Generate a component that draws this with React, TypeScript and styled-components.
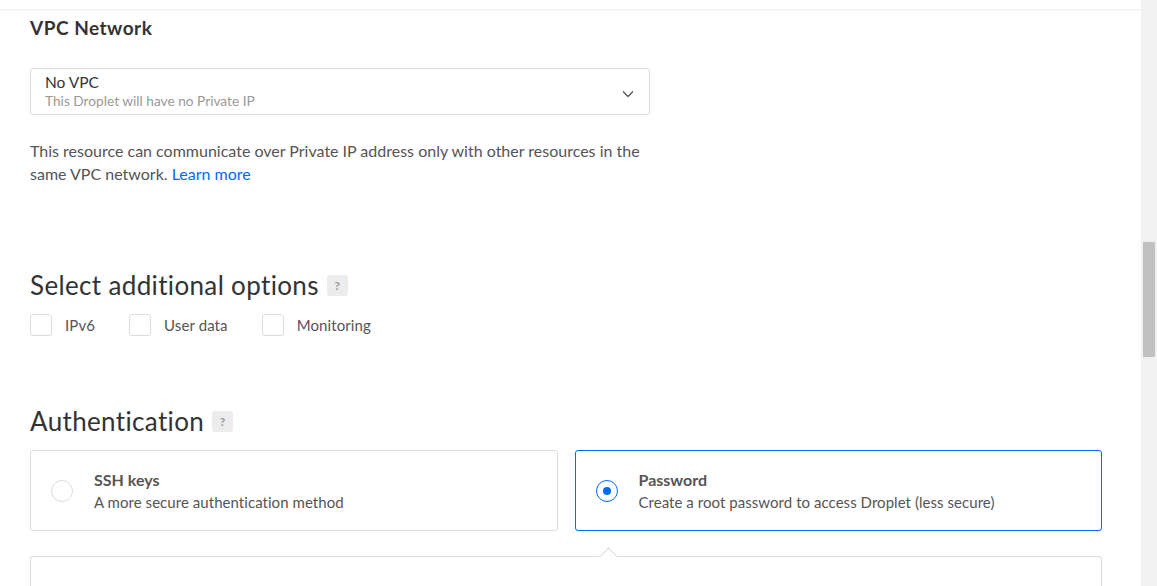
import React from "react";
import styled, { createGlobalStyle } from "styled-components";

const Global = createGlobalStyle`
  html, body { margin: 0; padding: 0; background: #fff; }
  body { font-family: Lato, "Open Sans", "Liberation Sans", sans-serif; -webkit-font-smoothing: antialiased; }
  * { box-sizing: border-box; }
`;

const Shell = styled.div`
  display: flex;
  width: 1157px;
  height: 586px;
  overflow: hidden;
`;

const Main = styled.div`
  flex: 1;
  display: flex;
  flex-direction: column;
  min-width: 0;
`;

const TopBar = styled.div`
  height: 10px;
  flex: none;
  border-bottom: 1px solid #ededed;
  box-shadow: 0 2px 4px rgba(0, 0, 0, 0.03);
`;

const Content = styled.div`
  padding: 0 39px 0 30px;
  display: flex;
  flex-direction: column;
`;

const SubTitle = styled.h3`
  margin: 7px 0 0;
  font-size: 19px;
  line-height: 22px;
  font-weight: 700;
  letter-spacing: 0.5px;
  color: #333;
`;

const Select = styled.div`
  margin-top: 29px;
  width: 620px;
  height: 47px;
  border: 1px solid #dcdcdc;
  border-radius: 3px;
  padding: 4px 14px 0 14px;
  display: flex;
  align-items: center;
  justify-content: space-between;
`;

const SelectText = styled.div`
  display: flex;
  flex-direction: column;
  align-self: flex-start;
`;

const SelectValue = styled.div`
  font-size: 15.5px;
  line-height: 18px;
  color: #333;
`;

const SelectHint = styled.div`
  font-size: 13.7px;
  line-height: 20px;
  color: #999;
`;

const Paragraph = styled.p`
  margin: 24px 0 0;
  width: 625px;
  font-size: 16px;
  line-height: 23px;
  color: #555;
`;

const Link = styled.a`
  color: #0069ff;
  text-decoration: none;
`;

const Heading = styled.h2<{ $top: number }>`
  margin: ${(p) => p.$top}px 0 0;
  display: flex;
  align-items: center;
  font-size: 26px;
  line-height: 32px;
  font-weight: 400;
  letter-spacing: 0.35px;
  color: #333;
`;

const Help = styled.span`
  margin-left: 8px;
  width: 21px;
  height: 21px;
  border-radius: 3px;
  background: #ececec;
  color: #999;
  font-size: 12px;
  font-weight: 700;
  letter-spacing: 0;
  line-height: 21px;
  text-align: center;
`;

const CheckRow = styled.div`
  margin-top: 13px;
  display: flex;
  align-items: center;
  gap: 34px;
`;

const CheckItem = styled.label`
  display: flex;
  align-items: center;
  gap: 13px;
  font-size: 15px;
  letter-spacing: 0.1px;
  color: #555;
`;

const Box = styled.span`
  width: 22px;
  height: 22px;
  border: 1px solid #dcdcdc;
  border-radius: 3px;
`;

const Cards = styled.div`
  margin-top: 13px;
  display: grid;
  grid-template-columns: 1fr 1fr;
  gap: 17px;
`;

const Card = styled.div<{ $active?: boolean }>`
  height: 81px;
  border: 1px solid ${(p) => (p.$active ? "#0069ff" : "#dcdcdc")};
  border-radius: 3px;
  padding: 0 20px;
  display: flex;
  align-items: center;
  gap: 21px;
`;

const Radio = styled.span<{ $on?: boolean }>`
  width: 22px;
  height: 22px;
  flex: none;
  border-radius: 50%;
  border: ${(p) => (p.$on ? "1.5px solid #0069ff" : "1px solid #dcdcdc")};
  display: flex;
  align-items: center;
  justify-content: center;
  &::after {
    content: "";
    display: ${(p) => (p.$on ? "block" : "none")};
    width: 8px;
    height: 8px;
    border-radius: 50%;
    background: #0069ff;
  }
`;

const CardText = styled.div`
  display: flex;
  flex-direction: column;
`;

const CardTitle = styled.div`
  font-size: 16px;
  line-height: 22px;
  font-weight: 700;
  color: #555;
`;

const CardSub = styled.div`
  font-size: 15px;
  line-height: 22px;
  letter-spacing: 0.05px;
  color: #555;
`;

const Panel = styled.div`
  position: relative;
  margin-top: 25px;
  height: 60px;
  border: 1px solid #dcdcdc;
  border-bottom: none;
  border-radius: 3px 3px 0 0;
`;

const Caret = styled.span`
  position: absolute;
  top: -7px;
  left: 571px;
  width: 13px;
  height: 13px;
  background: #fff;
  border-top: 1px solid #dcdcdc;
  border-left: 1px solid #dcdcdc;
  transform: rotate(45deg);
`;

const Track = styled.div`
  width: 16px;
  flex: none;
  background: #f1f1f1;
  padding: 242px 2px 0 2px;
`;

const Thumb = styled.div`
  height: 115px;
  background: #c1c1c1;
`;

const Chevron = () => (
  <svg width="14" height="14" viewBox="0 0 14 14" fill="none">
    <path d="M2 4.5 L7 9.5 L12 4.5" stroke="#555" strokeWidth="1.3" />
  </svg>
);

export default function App() {
  return (
    <Shell>
      <Global />
      <Main>
        <TopBar />
        <Content>
          <SubTitle>VPC Network</SubTitle>
          <Select>
            <SelectText>
              <SelectValue>No VPC</SelectValue>
              <SelectHint>This Droplet will have no Private IP</SelectHint>
            </SelectText>
            <Chevron />
          </Select>
          <Paragraph>
            This resource can communicate over Private IP address only with other resources in the same VPC
            network. <Link href="#">Learn more</Link>
          </Paragraph>

          <Heading $top={84}>
            Select additional options <Help>?</Help>
          </Heading>
          <CheckRow>
            <CheckItem>
              <Box />
              IPv6
            </CheckItem>
            <CheckItem>
              <Box />
              User data
            </CheckItem>
            <CheckItem>
              <Box />
              Monitoring
            </CheckItem>
          </CheckRow>

          <Heading $top={69}>
            Authentication <Help>?</Help>
          </Heading>
          <Cards>
            <Card>
              <Radio />
              <CardText>
                <CardTitle>SSH keys</CardTitle>
                <CardSub>A more secure authentication method</CardSub>
              </CardText>
            </Card>
            <Card $active>
              <Radio $on />
              <CardText>
                <CardTitle>Password</CardTitle>
                <CardSub>Create a root password to access Droplet (less secure)</CardSub>
              </CardText>
            </Card>
          </Cards>
          <Panel>
            <Caret />
          </Panel>
        </Content>
      </Main>
      <Track>
        <Thumb />
      </Track>
    </Shell>
  );
}
